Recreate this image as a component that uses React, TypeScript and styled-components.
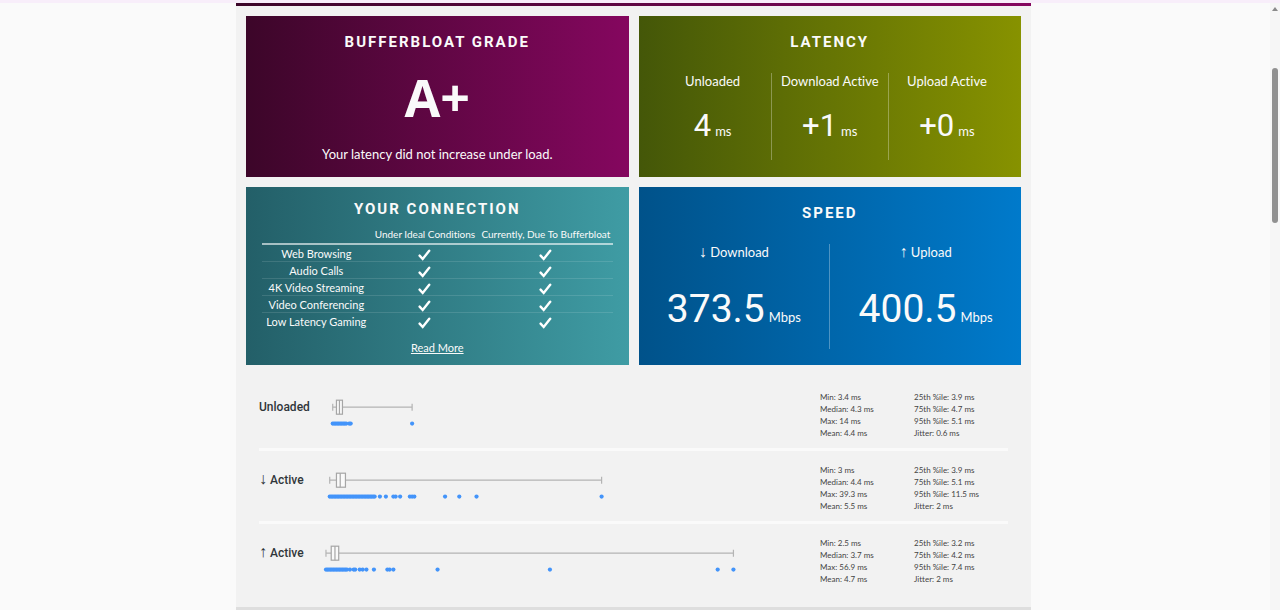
import React from "react";
import styled, { createGlobalStyle } from "styled-components";

const GlobalStyle = createGlobalStyle`
  * { box-sizing: border-box; }
  body {
    margin: 0;
    background: #fafafa;
    color: #fafafa;
    font-family: Lato, "Liberation Sans", sans-serif;
    font-variant-ligatures: none;
  }
`;

const Shell = styled.div`
  min-height: 100vh;
  display: grid;
  grid-template-columns: 1fr 10px;
  grid-template-rows: 3px 1fr;
  column-gap: 3px;
`;

const TopStrip = styled.div`
  grid-column: 1 / -1;
  background: #f8eefa;
`;

const Report = styled.main`
  width: 100%;
  max-width: 795px;
  margin: 0 auto;
  background: #f2f2f2;
  border-bottom: 3px solid #dedede;
`;

const Accent = styled.div`
  height: 3px;
  background: linear-gradient(90deg, #3c0629, #85075f);
`;

const Cards = styled.div`
  display: grid;
  grid-template-columns: 1fr 1fr;
  grid-template-rows: 161px 178px;
  gap: 10px;
  padding: 10px;
`;

const Card = styled.section<{ $from: string; $to: string; $top?: number; $side?: number }>`
  display: flex;
  flex-direction: column;
  align-items: center;
  padding: ${(p) => p.$top ?? 16}px ${(p) => p.$side ?? 16}px 0;
  background: linear-gradient(90deg, ${(p) => p.$from}, ${(p) => p.$to});
`;

const Title = styled.h2`
  margin: 0;
  font-family: Roboto, sans-serif;
  font-size: 15px;
  line-height: 20px;
  font-weight: 700;
  letter-spacing: 2px;
  text-transform: uppercase;
`;

const Grade = styled.strong`
  margin-top: 15px;
  font-family: "Open Sans", sans-serif;
  font-size: 52px;
  line-height: 60px;
  font-weight: 700;
`;

const Note = styled.p`
  margin: 17px 0 0;
  font-size: 13px;
  line-height: 20px;
`;

const Metrics = styled.div<{ $gap: number }>`
  align-self: stretch;
  display: flex;
  margin-top: ${(p) => p.$gap}px;
`;

const Metric = styled.div<{ $height: number }>`
  flex: 1 1 0;
  height: ${(p) => p.$height}px;
  display: flex;
  flex-direction: column;
  align-items: center;
  white-space: nowrap;
  & + & { border-left: 1px solid rgba(255, 255, 255, 0.3); }
`;

const MetricLabel = styled.span`
  font-size: 13px;
  line-height: 16px;
`;

const Value = styled.span<{ $size: number; $gap: number }>`
  margin-top: ${(p) => p.$gap}px;
  font-family: Roboto, sans-serif;
  font-size: ${(p) => p.$size}px;
  line-height: 48px;
  font-weight: 400;
`;

const Unit = styled.small`
  margin-left: 4px;
  font-family: Lato, sans-serif;
  font-size: 13px;
`;

const Arrow = styled.span`
  font-family: "Liberation Sans", sans-serif;
  font-size: 16px;
  line-height: 12px;
  font-weight: 400;
`;

const Activities = styled.table`
  width: 100%;
  margin-top: 8px;
  border-collapse: collapse;
  table-layout: fixed;
  text-align: center;
  white-space: nowrap;
  thead th {
    height: 17px;
    padding: 0 0 2px;
    font-size: 10px;
    line-height: 12px;
    font-weight: 400;
    border-bottom: 2px solid rgba(255, 255, 255, 0.6);
  }
  tbody th, td {
    height: 17px;
    padding: 0;
    font-size: 11px;
    line-height: 16px;
    font-weight: 400;
  }
  tbody th { padding-top: 1px; line-height: 15px; }
  tbody tr + tr { border-top: 1px solid rgba(255, 255, 255, 0.12); }
  svg { display: block; margin: 3px auto 0; }
`;

const MoreLink = styled.a`
  margin-top: 10px;
  color: inherit;
  font-size: 11px;
  line-height: 16px;
`;

const Samples = styled.div`
  padding: 3px 23px 13px;
`;

const SampleRow = styled.section`
  display: grid;
  grid-template-columns: 61px 1fr 94px 94px;
  padding: 13px 0 9px;
  & + & { border-top: 3px solid #fafafa; }
`;

const SampleName = styled.h3`
  margin: 0;
  color: #30363a;
  font-family: Roboto, sans-serif;
  font-size: 12px;
  line-height: 32px;
  font-weight: 500;
  white-space: nowrap;
`;

const Plot = styled.svg`
  display: block;
  width: 100%;
  height: 48px;
`;

const Stats = styled.ul`
  margin: 0;
  padding: 0;
  list-style: none;
  color: #444;
  font-size: 8px;
  line-height: 12px;
  white-space: nowrap;
`;

const Rail = styled.div`
  display: flex;
  flex-direction: column;
  align-items: center;
  background: #f6f6f6;
  padding-top: 4px;
`;

const Thumb = styled.div`
  width: 6px;
  height: 155px;
  margin-top: 57px;
  border-radius: 3px;
  background: #909090;
`;

const Check = () => (
  <svg width="13" height="12" viewBox="0 0 13 12" role="img" aria-label="Yes">
    <path d="M1.6 6.6 4.7 10 11.2 1.8" fill="none" stroke="#fff" strokeWidth="2.4" strokeLinecap="round" />
  </svg>
);

const activities = ["Web Browsing", "Audio Calls", "4K Video Streaming", "Video Conferencing", "Low Latency Gaming"];

type Sample = {
  arrow?: string;
  name: string;
  min: number; q1: number; median: number; q3: number; max: number;
  mean: number; p95: number; jitter: number;
  denseTo: number;
  points: number[];
};

const samples: Sample[] = [
  { name: "Unloaded", min: 3.4, q1: 3.9, median: 4.3, q3: 4.7, max: 14, mean: 4.4, p95: 5.1, jitter: 0.6, denseTo: 5.3, points: [5.6, 5.8, 14] },
  { arrow: "↓", name: "Active", min: 3, q1: 3.9, median: 4.4, q3: 5.1, max: 39.3, mean: 5.5, p95: 11.5, jitter: 2, denseTo: 9.1,
    points: [9.7, 10.5, 11.5, 11.8, 12.4, 13.7, 14, 14.3, 18.4, 20.3, 22.6, 39.3] },
  { arrow: "↑", name: "Active", min: 2.5, q1: 3.2, median: 3.7, q3: 4.2, max: 56.9, mean: 4.7, p95: 7.4, jitter: 2, denseTo: 5.3,
    points: [5.7, 6.2, 6.4, 7, 7.4, 7.9, 8.9, 10.7, 11, 11.5, 17.4, 32.4, 54.8, 56.9] },
];

// Milliseconds to plot position
const px = (ms: number) => ms * 7.49 - 12.75;

const BoxPlot = ({ s }: { s: Sample }) => {
  const dense: number[] = [];
  for (let v = s.min; v <= s.denseTo + 0.01; v += 0.2) dense.push(v);
  return (
    <Plot role="img" aria-label={`${s.name} latency distribution`}>
      <g fill="none" stroke="#b4b4b4" strokeWidth="1.2">
        <path d={`M${px(s.min)} 16.2H${px(s.q1)}M${px(s.q3)} 16.2H${px(s.max)}`} />
        <path d={`M${px(s.min)} 12.7v7M${px(s.max)} 12.7v7`} />
        <rect x={px(s.q1)} y="9.2" width={px(s.q3) - px(s.q1)} height="14" fill="#fafafa" stroke="#a6a6a6" />
        <path d={`M${px(s.median)} 9.2v14`} stroke="#a6a6a6" />
      </g>
      <g fill="#4394fa">
        {[...dense, ...s.points].map((v, i) => <circle key={i} cx={px(v)} cy="32.6" r="2.1" />)}
      </g>
    </Plot>
  );
};

export default function App() {
  return (
    <>
      <GlobalStyle />
      <Shell>
        <TopStrip />
        <Report>
          <Accent />
          <Cards>
            <Card $from="#3c0629" $to="#85075f">
              <Title>Bufferbloat Grade</Title>
              <Grade>A+</Grade>
              <Note>Your latency did not increase under load.</Note>
            </Card>
            <Card $from="#445708" $to="#879200">
              <Title>Latency</Title>
              <Metrics $gap={21}>
                {[["Unloaded", "4"], ["Download Active", "+1"], ["Upload Active", "+0"]].map(([label, value]) => (
                  <Metric key={label} $height={87}>
                    <MetricLabel>{label}</MetricLabel>
                    <Value $size={31} $gap={13}>{value}<Unit>ms</Unit></Value>
                  </Metric>
                ))}
              </Metrics>
            </Card>
            <Card $from="#235f68" $to="#3f9ca4" $top={12}>
              <Title>Your Connection</Title>
              <Activities>
                <colgroup>
                  <col style={{ width: "31%" }} />
                  <col style={{ width: "31%" }} />
                  <col style={{ width: "38%" }} />
                </colgroup>
                <thead>
                  <tr>
                    <th aria-label="Activity" />
                    <th scope="col">Under Ideal Conditions</th>
                    <th scope="col">Currently, Due To Bufferbloat</th>
                  </tr>
                </thead>
                <tbody>
                  {activities.map((name) => (
                    <tr key={name}>
                      <th scope="row">{name}</th>
                      <td><Check /></td>
                      <td><Check /></td>
                    </tr>
                  ))}
                </tbody>
              </Activities>
              <MoreLink href="#more">Read More</MoreLink>
            </Card>
            <Card $from="#00528a" $to="#007acb" $side={0}>
              <Title>Speed</Title>
              <Metrics $gap={21}>
                {[["↓", "Download", "373.5"], ["↑", "Upload", "400.5"]].map(([arrow, label, value]) => (
                  <Metric key={label} $height={105}>
                    <MetricLabel><Arrow>{arrow}</Arrow> {label}</MetricLabel>
                    <Value $size={39} $gap={25}>{value}<Unit>Mbps</Unit></Value>
                  </Metric>
                ))}
              </Metrics>
            </Card>
          </Cards>
          <Samples>
            {samples.map((s) => (
              <SampleRow key={s.max}>
                <SampleName>{s.arrow && <><Arrow>{s.arrow}</Arrow> </>}{s.name}</SampleName>
                <BoxPlot s={s} />
                <Stats>
                  <li>Min: {s.min} ms</li>
                  <li>Median: {s.median} ms</li>
                  <li>Max: {s.max} ms</li>
                  <li>Mean: {s.mean} ms</li>
                </Stats>
                <Stats>
                  <li>25th %ile: {s.q1} ms</li>
                  <li>75th %ile: {s.q3} ms</li>
                  <li>95th %ile: {s.p95} ms</li>
                  <li>Jitter: {s.jitter} ms</li>
                </Stats>
              </SampleRow>
            ))}
          </Samples>
        </Report>
        <Rail>
          <svg width="6" height="4" viewBox="0 0 6 4" aria-hidden="true">
            <path d="M3 0 6 4H0Z" fill="#8a8a8a" />
          </svg>
          <Thumb />
        </Rail>
      </Shell>
    </>
  );
}
